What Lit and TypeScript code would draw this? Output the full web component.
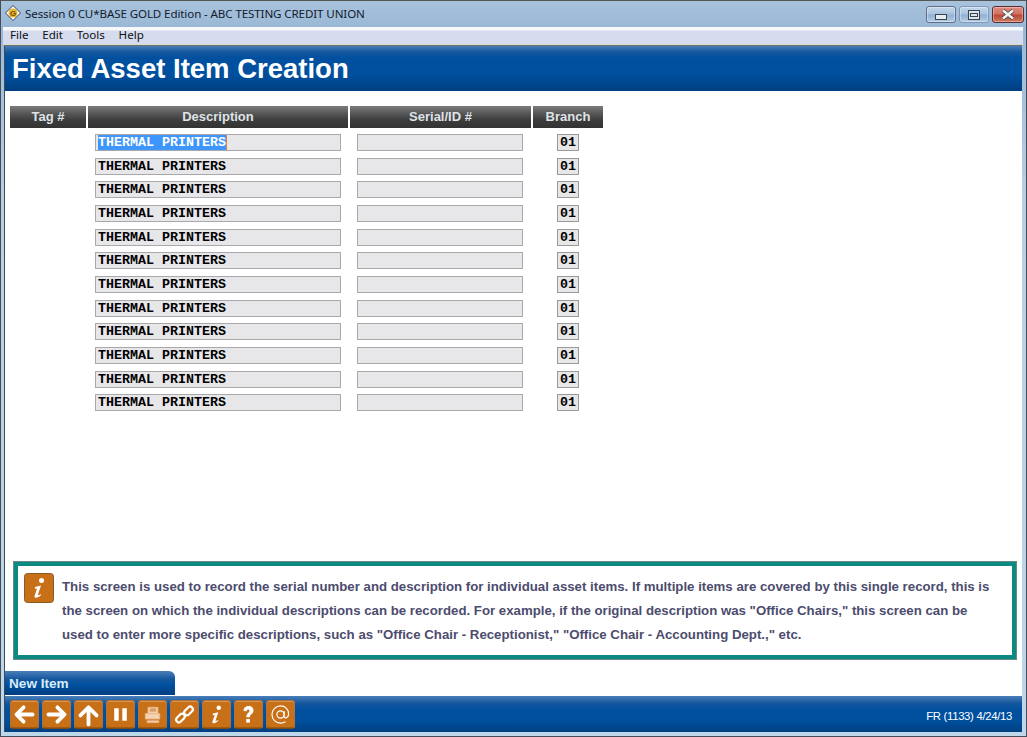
import { LitElement, html, css, svg } from "lit";
import { customElement } from "lit/decorators.js";

const icons = [
  svg`<path d="M24 15H7M14 7l-8 8 8 8" fill="none" stroke="#fff" stroke-width="4.2" stroke-linecap="round" stroke-linejoin="round"/>`,
  svg`<path d="M6 15h17M16 7l8 8-8 8" fill="none" stroke="#fff" stroke-width="4.2" stroke-linecap="round" stroke-linejoin="round"/>`,
  svg`<path d="M15 26V8M6 16l9-9 9 9" fill="none" stroke="#fff" stroke-width="4.2" stroke-linecap="round" stroke-linejoin="round"/>`,
  svg`<path d="M8 8h5v14H8zM17 8h5v14h-5z" fill="#fff"/>`,
  svg`<path d="M10 7h11v7H10zM7 14h16v6H7zM9 22h13v2H9z" fill="#f3d3b0" stroke="#e8b98a" stroke-width="1"/><path d="M12 9h7M12 11h7" stroke="#c8701d"/>`,
  svg`<g fill="none" stroke="#fff" stroke-width="2.4"><rect x="5" y="16" width="11" height="6" rx="3" transform="rotate(-45 10.5 19)"/><rect x="14" y="8" width="11" height="6" rx="3" transform="rotate(-45 19.5 11)"/></g>`,
  svg`<circle cx="17.500" cy="7.500" r="2.500" fill="#fff"/><path d="M11 14l6-1.500-3 9c-.3 1 .5 1.200 2.500-.5l.5 1c-2.500 3-7 4-6.500 1l2.500-7.500-2.200.3z" fill="#fff"/>`,
  svg`<path d="M9.500 11c0-7 11-7 11-.5 0 4-4 4-4 7.500h-4c0-5 3.500-4.500 3.500-7 0-2-3-2-3 .5z" fill="#fff"/><rect x="12.500" y="20" width="4" height="4" fill="#fff"/>`,
  svg`<g fill="none" stroke="#fff" stroke-width="1.300"><circle cx="15" cy="15" r="4"/><path d="M19 11v6c0 3 5 2 5-2.500C24 9 20 5.500 15 5.500S5.500 9.500 5.500 15 10 24.500 15 24.500c2.500 0 4-.6 5.500-1.500"/></g>`,
];

const COLUMNS = ["Tag #", "Description", "Serial/ID #", "Branch"];

@customElement("app-root")
export class AppRoot extends LitElement {
  static styles = css`
    :host {
      display: flex;
      flex-direction: column;
      width: 1027px;
      height: 737px;
      overflow: hidden;
      box-sizing: border-box;
      background: linear-gradient(#a9c2dc, #9ab8d6 26px, #b9d0e4 200px, #bcd8ea);
      font-family: "Liberation Sans", Arial, sans-serif;
      padding: 0 4px 4px 3px;
      border-left: 1px solid #444c58;
      border-right: 1px solid #444c58;
      border-top: 1px solid #555;
      border-bottom: 1px solid #444c58;
    }
    .title {
      height: 26px;
      flex: none;
      box-sizing: border-box;
      padding: 0 0 2px 1px;
      display: flex;
      align-items: center;
      font: 11.6px "Noto Sans", "Open Sans", sans-serif;
      color: #10202e;
      gap: 4px;
    }
    .title span { flex: 1; letter-spacing: -0.12px; }
    .logo { width: 16px; height: 16px; flex: none; }
    .wbtns { display: flex; gap: 3px; margin-right: -2px; align-self: flex-start; padding-top: 5px; }
    .wbtn {
      width: 30px; height: 17px; box-sizing: border-box;
      border: 1px solid #5f6f8c; border-radius: 3px;
      background: linear-gradient(#c4d8ea 0, #a7c2de 48%, #8fb0d2 52%, #b5cde3);
      display: flex; align-items: center; justify-content: center;
      box-shadow: inset 0 0 0 1px rgba(255,255,255,.35);
    }
    .wbtn.max { border-color: #8098b8; }
    .wbtn.close {
      width: 32px;
      background: linear-gradient(#dc8c80 0, #d2705f 48%, #bb4630 52%, #cf7a60);
      border-color: #5d2b33;
    }
    .min-g { width: 10px; height: 4px; margin-top: 4px; background: #e8ebee; border: 1px solid #39424f; }
    .max-g { width: 10px; height: 8px; border: 1px solid #39424f; background: #dce4ec; display: flex; align-items: center; justify-content: center; }
    .max-g i { display: block; width: 6px; height: 2px; border: 1px solid #39424f; }
    .menu {
      height: 18px;
      flex: none;
      display: flex;
      align-items: center;
      gap: 13.7px;
      padding: 0 0 3px 7px;
      font: 11.6px "Noto Sans", "Open Sans", sans-serif;
      color: #111;
      background: linear-gradient(#f6f8fb 0, #f6f8fb 3px, #d6dcee 4px, #d6dcee 100%);
      margin: 0 -1px;
      box-sizing: border-box;
      border-bottom: 1px solid #dcdccb;
    }
    .client {
      flex: 1;
      display: flex;
      flex-direction: column;
      background: #fff;
      border-left: 1px solid #3c4a5c;
      border-top: 1px solid #6e6e6e;
      min-height: 0;
    }
    .banner {
      height: 45px;
      flex: none;
      box-sizing: border-box;
      background: linear-gradient(#4a7fb8 0, #15579f 6px, #00509f 12px, #00509f 28px, #003f80 45px);
      color: #fff;
      font-size: 27.5px;
      font-weight: 700;
      line-height: 46px;
      padding-left: 7px;
    }
    .table { padding: 15px 0 0 5px; flex: 1; }
    .heads, .row {
      display: grid;
      grid-template-columns: 76px 260px 181px 70px;
      gap: 2px;
    }
    .heads div {
      height: 22px;
      background: linear-gradient(#7c7c7c, #565656 35%, #3c3c3c 65%, #333);
      color: #dfe3e8;
      font-weight: 700;
      font-size: 13px;
      text-align: center;
      line-height: 21px;
    }
    .rows { display: grid; grid-auto-rows: 23.67px; margin-top: 6px; }
    .field {
      box-sizing: border-box;
      height: 17px;
      background: #e7e7e9;
      border: 1px solid #a9a9ab;
      font: 700 13.33px/15px "Liberation Mono", "DejaVu Sans Mono", monospace;
      color: #000;
      padding-left: 2px;
      white-space: nowrap;
      overflow: hidden;
    }
    .desc { width: 246px; margin-left: 7px; }
    .serial { width: 166px; margin-left: 7px; }
    .branch { width: 22px; margin-left: 24px; text-align: center; padding: 0; border-color: #9a9a9c; }
    .sel { background: #3d96fb; color: #fff; display: inline-block; height: 15px; border-right: 1px solid #e08030; }
    .info {
      margin: 0 5px 11px 8px;
      height: 99px;
      flex: none;
      box-sizing: border-box;
      border: 5px solid #0c8a82;
      outline: 1px solid #6a8a88;
      outline-offset: -1px;
      display: flex;
      gap: 8px;
      padding: 7px 0 0 6px;
      background: #fff;
    }
    .info-i { flex: none; width: 30px; height: 30px; }
    .info p {
      margin: 0;
      font-size: 13.24px;
      font-weight: 700;
      line-height: 24px;
      color: #4c4c6e;
      white-space: pre-line;
      padding-top: 2px;
    }
    .tab {
      width: 170px;
      height: 24px;
      flex: none;
      box-sizing: border-box;
      border-top-right-radius: 6px;
      background: linear-gradient(#4a7fb8 0, #15579f 8px, #00509f 14px, #003f80 24px);
      color: #d8ecf8;
      font-size: 13.6px;
      font-weight: 700;
      line-height: 26px;
      padding-left: 4px;
    }
    .foot {
      height: 36px;
      flex: none;
      margin-top: 1px;
      box-sizing: border-box;
      background: linear-gradient(#4a7fb8 0, #15579f 7px, #00509f 14px, #00509f 24px, #003f80 36px);
      display: flex;
      align-items: center;
      justify-content: space-between;
      padding: 0 10px 0 5px;
      color: #fff;
      font-size: 11.3px;
    }
    .btns { display: flex; gap: 3px; }
    .btn {
      width: 29px; height: 29px;
      box-sizing: border-box;
      border-radius: 3px;
      background: #c87018;
      border: 1px solid #b07238;
      border-bottom-color: #7d4a18;
      box-shadow: inset 0 1px 0 rgba(255,255,255,.25), inset 0 -1px 0 rgba(90,50,10,.35);
      display: block;
    }
    .stamp { letter-spacing: -0.3px; padding-top: 3px; }
  `;

  render() {
    const rows = Array.from({ length: 12 }, (_, i) => i);
    return html`
      <div class="title">
        <svg class="logo" viewBox="0 0 16 16">
          <path d="M8 .5L15.500 8 8 15.500.5 8z" fill="#fff" stroke="#30405c"/>
          <circle cx="8" cy="8" r="4.500" fill="#e6b52c"/>
          <text x="8" y="11" font-size="8" font-weight="700" text-anchor="middle" fill="#7a4c08" font-family="Liberation Sans">G</text>
        </svg>
        <span>Session 0 CU*BASE GOLD Edition - ABC TESTING CREDIT UNION</span>
        <div class="wbtns">
          <div class="wbtn"><div class="min-g"></div></div>
          <div class="wbtn max"><div class="max-g"><i></i></div></div>
          <div class="wbtn close">
            <svg width="14" height="11" viewBox="0 0 14 11"><path d="M2 1.500l10 8M12 1.500l-10 8" stroke="#3c3c44" stroke-width="4"/><path d="M2 1.500l10 8M12 1.500l-10 8" stroke="#f2f2f2" stroke-width="2.600"/></svg>
          </div>
        </div>
      </div>
      <div class="menu"><span>File</span><span>Edit</span><span>Tools</span><span>Help</span></div>
      <div class="client">
        <div class="banner">Fixed Asset Item Creation</div>
        <div class="table">
          <div class="heads">${COLUMNS.map((c) => html`<div>${c}</div>`)}</div>
          <div class="rows">
            ${rows.map(
              (i) => html`<div class="row">
                <div></div>
                <div class="field desc">${i === 0 ? html`<span class="sel">THERMAL PRINTERS</span>` : "THERMAL PRINTERS"}</div>
                <div class="field serial"></div>
                <div class="field branch">01</div>
              </div>`
            )}
          </div>
        </div>
        <div class="info">
          <svg class="info-i" viewBox="0 0 30 30">
            <rect x=".5" y=".5" width="29" height="29" rx="3" fill="#c87018" stroke="#8a5a2c"/>
            ${icons[6]}
          </svg>
          <p>This screen is used to record the serial number and description for individual asset items. If multiple items are covered by this single record, this is
the screen on which the individual descriptions can be recorded. For example, if the original description was "Office Chairs," this screen can be
used to enter more specific descriptions, such as "Office Chair - Receptionist," "Office Chair - Accounting Dept.," etc.</p>
        </div>
        <div class="tab">New Item</div>
        <div class="foot">
          <div class="btns">
            ${icons.map((p) => html`<svg class="btn" viewBox="0 0 30 30">${p}</svg>`)}
          </div>
          <div class="stamp">FR (1133) 4/24/13</div>
        </div>
      </div>
    `;
  }
}
